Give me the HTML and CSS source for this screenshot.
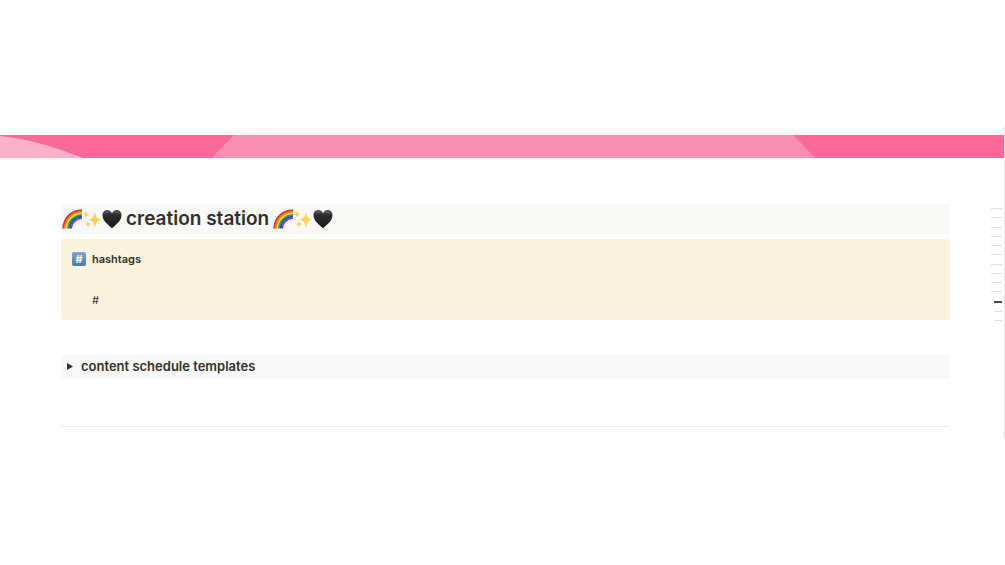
FILE: index.html
```html
<!DOCTYPE html>
<html lang="en">
  <head>
    <meta charset="UTF-8" />
    <meta name="viewport" content="width=device-width, initial-scale=1.0" />
    <title>creation station</title>
    <link rel="stylesheet" href="styles.css">
  </head>
  <body>
    <!-- shared emoji -->
    <svg class="defs" width="0" height="0" aria-hidden="true">
      <defs>
        <linearGradient id="heartFill" x1="0" y1="0" x2="0" y2="1">
          <stop offset="0" stop-color="#4e4e4e" />
          <stop offset="0.3" stop-color="#2c2c2c" />
          <stop offset="1" stop-color="#19191b" />
        </linearGradient>
        <symbol id="rainbow" viewBox="0 0 20 20">
          <g fill="none" stroke-width="2">
            <path d="M1.2 19.5C2 9 9 1.6 20 1.2" stroke="#e5302c" />
            <path d="M2.9 19.5C3.6 10 10 3.3 20 2.8" stroke="#f47a20" />
            <path d="M4.5 19.5C5.2 11.2 11 5 20 4.4" stroke="#fbdc1c" />
            <path d="M6.1 19.5C6.6 12 12 6.6 20 6" stroke="#25ad3c" />
            <path d="M7.7 19.5C8 13 13 8.2 20 7.6" stroke="#1a50f0" />
            <path d="M9.2 19.5C9.6 14 13.8 9.8 20 9" stroke="#8528e0" stroke-width="1.4" />
          </g>
        </symbol>
        <symbol id="sparkles" viewBox="0 0 20 20">
          <g fill="#fdd05c">
            <path d="M12.8 2.5Q13.6 10 19.5 10.8Q13.6 11.6 12.8 18.5Q12 11.6 6.2 10.8Q12 10 12.8 2.5Z" />
            <path d="M4 1.5Q4.5 4.7 7.4 5.2Q4.5 5.7 4 9Q3.5 5.7.6 5.2Q3.5 4.7 4 1.5Z" />
            <path d="M6 12Q6.4 14.6 9 15Q6.4 15.4 6 18.4Q5.6 15.4 3 15Q5.6 14.6 6 12Z" />
          </g>
        </symbol>
        <symbol id="heart" viewBox="0 0 20 20">
          <path d="M10 19.3C7.4 16.4.5 12.4.5 6.5C.5 3.2 2.6 1 5.3 1C7.6 1 9.3 2.4 10 4.5C10.7 2.4 12.4 1 14.7 1C17.4 1 19.5 3.2 19.5 6.5C19.5 12.4 12.6 16.4 10 19.3Z" fill="url(#heartFill)" />
          <path d="M3 4.3Q4.3 2.2 6.5 2.8M12.8 3.2Q15 1.8 17 4" fill="none" stroke="#707070" stroke-width="1" stroke-linecap="round" />
        </symbol>
      </defs>
    </svg>

    <div class="page">
      <div class="cover">
        <svg viewBox="0 0 1005 24" preserveAspectRatio="none" aria-hidden="true">
          <rect width="1005" height="24" fill="#fb6998" />
          <path d="M0 1Q38 5 83 24H0Z" fill="#fcb0c9" />
          <path d="M234 0H794L816 24H212Z" fill="#f98fb0" />
        </svg>
      </div>

      <div class="body">
        <main class="content">
          <h1 class="title">
            <span class="emoji">
              <svg><use href="#rainbow" /></svg>
              <svg><use href="#sparkles" /></svg>
              <svg><use href="#heart" /></svg>
            </span>
            creation station
            <span class="emoji">
              <svg><use href="#rainbow" /></svg>
              <svg><use href="#sparkles" /></svg>
              <svg><use href="#heart" /></svg>
            </span>
          </h1>

          <section class="callout">
            <span class="keycap">#</span>
            <div>
              <h2>hashtags</h2>
              <p>#</p>
            </div>
          </section>

          <details class="toggle">
            <summary>
              <svg class="arrow" viewBox="0 0 6 7" aria-hidden="true"><path d="M0 0L6 3.5L0 7Z" /></svg>
              content schedule templates
            </summary>
          </details>

          <hr>
        </main>

        <nav class="outline" aria-label="Page outline">
          <a href="#"></a>
          <a href="#"></a>
          <a href="#"></a>
          <a href="#"></a>
          <a href="#"></a>
          <a href="#"></a>
          <a href="#"></a>
          <a href="#"></a>
          <a href="#"></a>
          <a href="#"></a>
          <a href="#" class="sub current"></a>
          <a href="#" class="sub"></a>
          <a href="#" class="sub"></a>
        </nav>
      </div>
    </div>
  </body>
</html>
```
FILE: styles.css
```css
body {
  font-family: Inter, 'Liberation Sans', sans-serif;
  background-color: #fff;
  color: #32302c;
  margin: 0;
}

.defs {
  position: absolute;
}

.page {
  margin-top: 126px;
  padding: 9px 0 11px;
  border-right: 1px solid #e4e4e4;
}

.cover svg {
  display: block;
  width: 100%;
  height: 23px;
}

.body {
  display: flex;
  align-items: flex-start;
  gap: 41px;
  padding: 46px 2px 0 61px;
}

.content {
  flex: 1;
}

.title {
  display: flex;
  align-items: center;
  gap: 4px;
  margin: 0 0 5px;
  padding: 0 1px;
  background-color: #f8f8f7;
  font-size: 19px;
  font-weight: 600;
  line-height: 30px;
}

.emoji {
  display: flex;
}

.emoji svg {
  width: 20px;
  height: 20px;
}

.callout {
  display: flex;
  gap: 6px;
  padding: 11px;
  border-radius: 3px;
  background-color: #fbf3dd;
  font-size: 11px;
  line-height: 18px;
}

.keycap {
  width: 14px;
  height: 14px;
  margin-top: 2px;
  border-radius: 2px;
  background: linear-gradient(#7fa6cc, #4b78a8);
  color: #fff;
  font-size: 11px;
  font-weight: 700;
  line-height: 14px;
  text-align: center;
}

.callout h2 {
  margin: 0 0 23px;
  font-size: 11px;
  font-weight: 600;
}

.callout p {
  margin: 0;
}

.toggle {
  margin-top: 34px;
  background-color: #f8f8f7;
}

.toggle summary {
  display: flex;
  align-items: center;
  gap: 8px;
  padding: 1px 6px 2px;
  font-size: 13px;
  font-weight: 600;
  line-height: 22px;
  cursor: pointer;
}

.arrow {
  width: 6px;
  height: 7px;
  fill: #32302c;
}

hr {
  margin: 47px 0 0;
  border: 0;
  border-top: 1px solid #ebebea;
}

.outline {
  display: flex;
  flex-direction: column;
  align-items: flex-end;
  justify-content: space-between;
  width: 11px;
  height: 113px;
  margin-top: 4px;
}

.outline a {
  width: 100%;
  height: 1px;
  background-color: #dededc;
}

.outline .sub {
  width: 8px;
}

.outline .current {
  height: 2px;
  background-color: #4a4946;
}
```
